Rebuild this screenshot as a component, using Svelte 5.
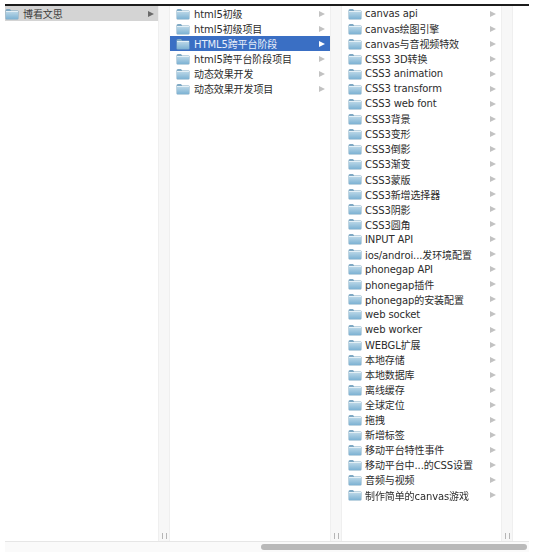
<script>
  const first = [{ name: "博看文思", on: "grey" }];
  const second = [
    { name: "html5初级" },
    { name: "html5初级项目" },
    { name: "HTML5跨平台阶段", on: "blue" },
    { name: "html5跨平台阶段项目" },
    { name: "动态效果开发" },
    { name: "动态效果开发项目" },
  ];
  const third = [
    "canvas api", "canvas绘图引擎", "canvas与音视频特效", "CSS3 3D转换", "CSS3 animation",
    "CSS3 transform", "CSS3 web font", "CSS3背景", "CSS3变形", "CSS3倒影", "CSS3渐变",
    "CSS3蒙版", "CSS3新增选择器", "CSS3阴影", "CSS3圆角", "INPUT API", "ios/androi...发环境配置",
    "phonegap API", "phonegap插件", "phonegap的安装配置", "web socket", "web worker", "WEBGL扩展",
    "本地存储", "本地数据库", "离线缓存", "全球定位", "拖拽", "新增标签", "移动平台特性事件",
    "移动平台中...的CSS设置", "音频与视频", "制作简单的canvas游戏",
  ].map((name) => ({ name }));

  const columns = [
    { items: first, cls: "col-a" },
    { items: second, cls: "col-b" },
    { items: third, cls: "col-c" },
  ];
</script>

<div class="browser">
  <div class="columns">
    {#each columns as col}
      <div class="column {col.cls}">
        <ul>
          {#each col.items as item}
            <li class={item.on ?? ""}>
              <svg class="folder" viewBox="0 0 14 12" width="14" height="12">
                <defs>
                  <linearGradient id="body-{col.cls}" x1="0" y1="0" x2="0" y2="1">
                    <stop offset="0" stop-color="#bcd8e8" />
                    <stop offset="1" stop-color="#7db2d3" />
                  </linearGradient>
                </defs>
                <path d="M0.5 2.5 Q0.5 1 2 1 H5 L6.2 2.5 H12.5 Q13.5 2.5 13.5 3.5 V10.5 Q13.5 11.5 12.5 11.5 H1.5 Q0.5 11.5 0.5 10.5 Z" fill="#7fa9c4" />
                <rect x="1" y="3.5" width="12" height="7.5" rx="0.8" fill="url(#body-{col.cls})" />
                <rect x="1" y="3" width="12" height="1" fill="#e4f0f6" />
              </svg>
              <span class="label">{item.name}</span>
              <span class="arrow"></span>
            </li>
          {/each}
        </ul>
      </div>
      <div class="gutter"><span class="grip"></span></div>
    {/each}
  </div>
  <div class="hscroll"><div class="thumb"></div></div>
</div>

<style>
  :global(body) {
    margin: 0;
    background: #fff;
  }

  .browser {
    width: 535px;
    height: 554px;
    box-sizing: border-box;
    padding: 4px 6px 0 5px;
    display: flex;
    flex-direction: column;
    font-family: "DejaVu Sans", "Noto Sans CJK SC", sans-serif;
    filter: blur(0.45px);
    overflow: hidden;
  }

  .columns {
    flex: none;
    height: 538px;
    display: flex;
    border-top: 2px solid #1c1c1c;
    border-bottom: 1px solid #e6e6e6;
    box-sizing: border-box;
  }

  .column {
    flex: none;
    background: #fff;
  }

  .col-a { width: 153px; }
  .col-b { width: 160px; }
  .col-c { width: 159px; }

  ul {
    list-style: none;
    margin: 0;
    padding: 0;
  }

  li {
    height: 15.06px;
    display: flex;
    align-items: center;
    padding-left: 6px;
    padding-right: 4px;
    font-size: 10px;
    letter-spacing: -0.1px;
    color: #2c2c2c;
    white-space: nowrap;
  }

  .col-a li {
    padding-left: 0;
    padding-right: 3px;
  }

  .col-a li .label {
    margin-left: 4px;
  }

  li.grey {
    background: #d4d4d4;
    color: #3c3c3c;
  }

  li.blue {
    background: #3a6fc4;
    color: #e8eefa;
  }

  .folder {
    flex: none;
  }

  .label {
    flex: 1;
    margin-left: 4px;
  }

  .col-c .label {
    margin-left: 3px;
  }

  .arrow {
    flex: none;
    width: 0;
    height: 0;
    border-left: 6px solid #c2c2c2;
    border-top: 3px solid transparent;
    border-bottom: 3px solid transparent;
    margin-right: 1px;
  }

  li.grey .arrow {
    border-left-color: #6a6a6a;
  }

  li.blue .arrow {
    border-left-color: #fff;
  }

  .gutter {
    flex: none;
    width: 12px;
    background: #f7f7f7;
    border-left: 1px solid #efefef;
    border-right: 1px solid #efefef;
    box-sizing: border-box;
    display: flex;
    align-items: flex-end;
    justify-content: center;
    padding-bottom: 2px;
  }

  .grip {
    width: 3px;
    height: 6px;
    border-left: 1px solid #b5b5b5;
    border-right: 1px solid #b5b5b5;
  }

  .hscroll {
    flex: none;
    height: 10px;
    background: #fafafa;
    display: flex;
    justify-content: flex-end;
    align-items: center;
    padding-right: 2px;
  }

  .thumb {
    width: 266px;
    height: 6px;
    border-radius: 3px;
    background: #b9b9b9;
  }
</style>
